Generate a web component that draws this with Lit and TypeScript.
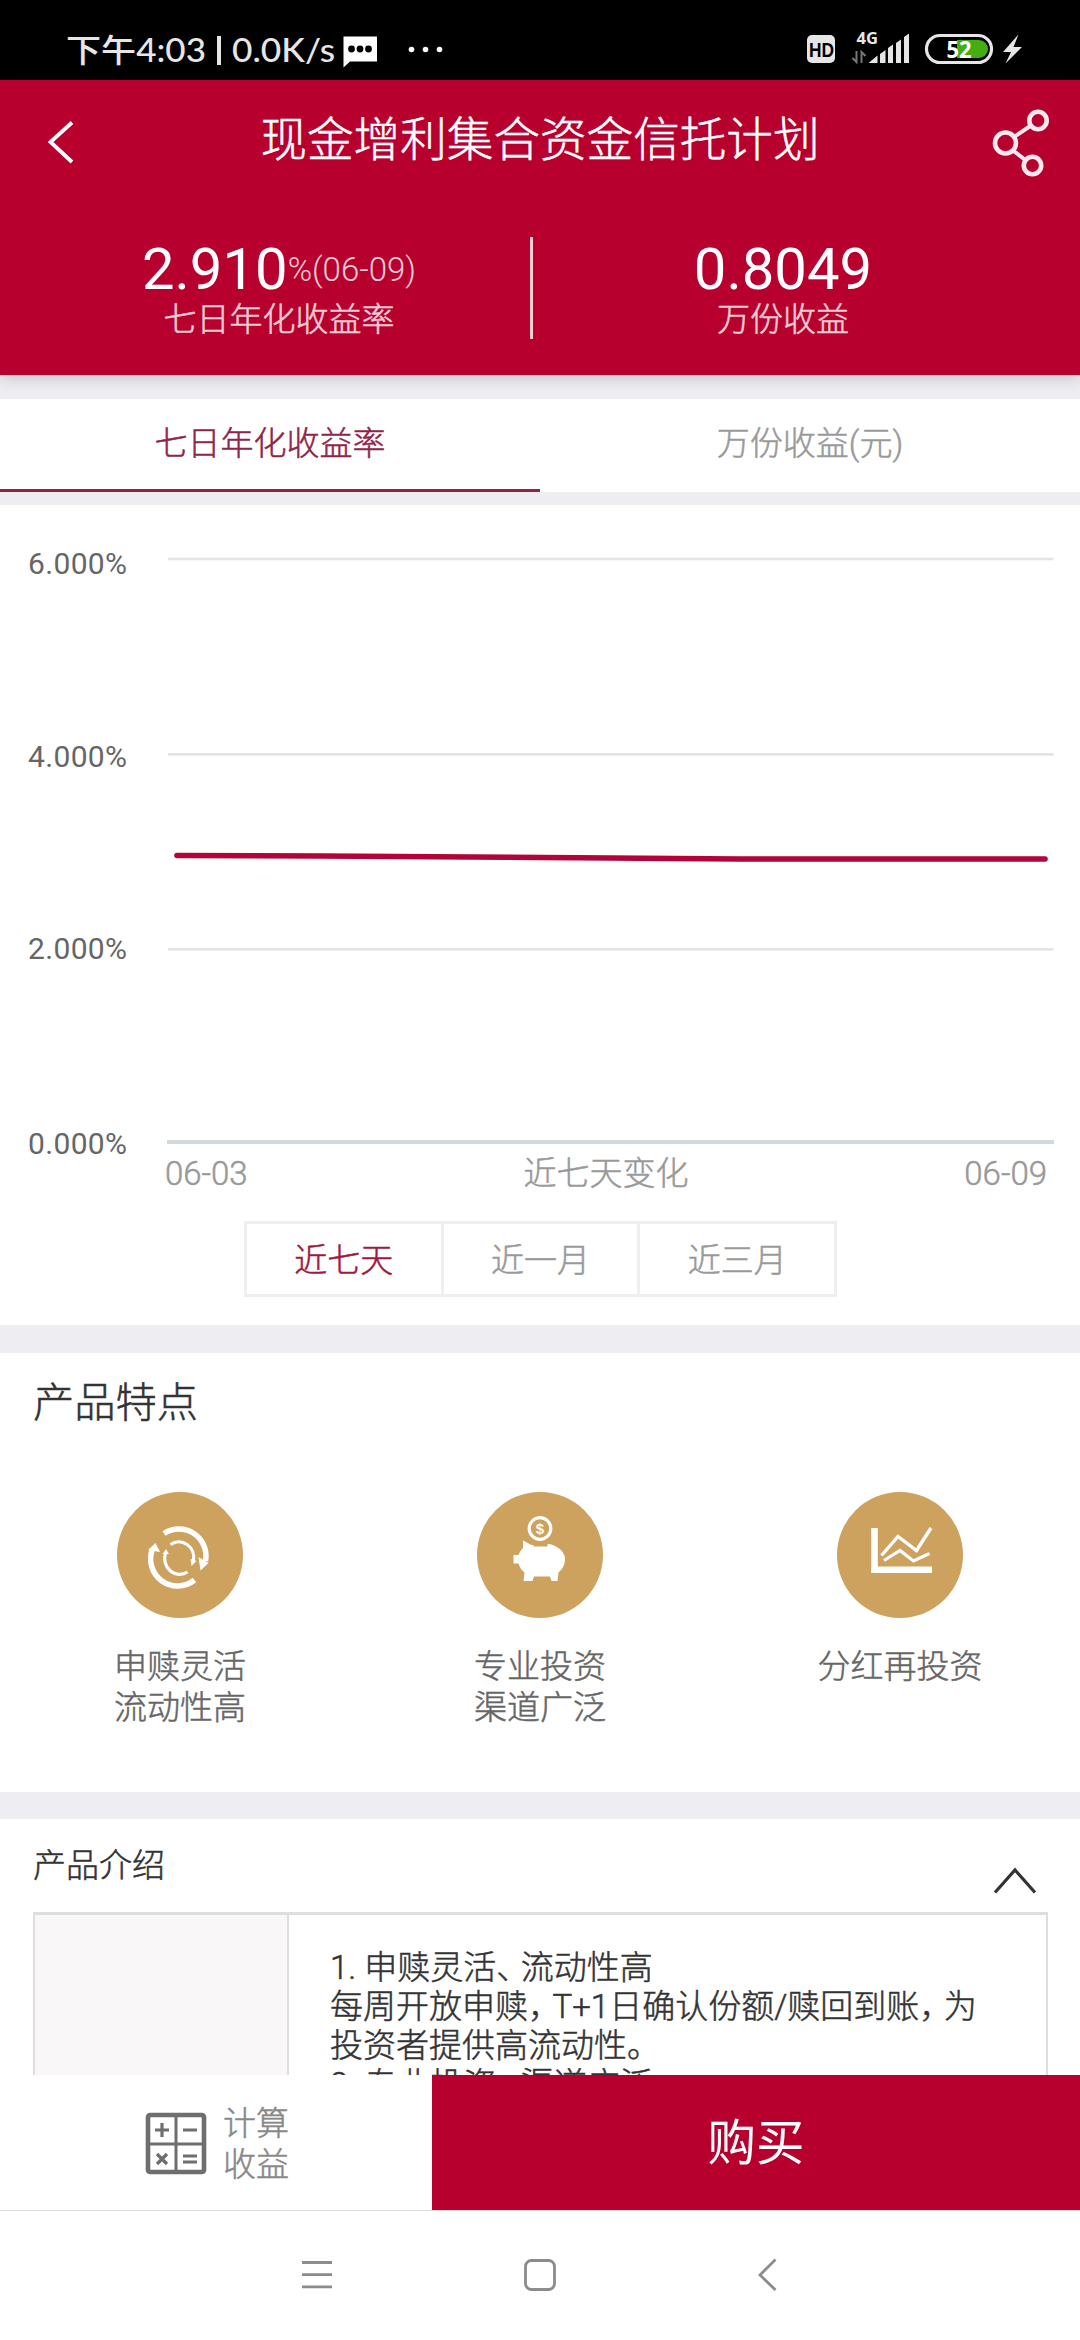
import { LitElement, html, css, svg } from "lit";
import { customElement, state } from "lit/decorators.js";

const ticks = [
  { label: "6.000%", line: 559, base: 574 },
  { label: "4.000%", line: 754.4, base: 767 },
  { label: "2.000%", line: 949.4, base: 959 },
];

const refreshIcon = svg`
  <g fill="none" stroke="#fff" stroke-linecap="butt">
    <path d="M47 41.500A27 27 0 0 1 88.500 69" stroke-width="5.500"/>
    <path d="M77.500 88A27 27 0 0 1 35.500 57" stroke-width="5.500"/>
    <path d="M53.500 52.500A15 16 0 0 1 76.500 69" stroke-width="3.200"/>
    <path d="M70.500 80A15 16 0 0 1 48.500 61" stroke-width="3.200"/>
  </g>
  <path fill="#fff" d="M81.500 65l10 6-8 7.500zM31 58l7.500-7 4.500 9zM73.500 67l6 2-5 5zM45.500 62l3.500-5 3 5z"/>`;

const piggyIcon = svg`
  <circle cx="63" cy="36.500" r="10.800" fill="none" stroke="#fff" stroke-width="3.200"/>
  <text x="63" y="42" class="coin">$</text>
  <path fill="#fff" d="M46 48.500l8.500 4.500h2v1.500h14v-2.500h2.500c9.500 3 15.500 8.500 15 16-.300 6-3.500 10-6.500 12.500l-1 8.500h-6l-1.500-4.500h-16l-1.500 4.500h-9l1-8.500c-3.500-2.500-5-6-6-9h-5v-8.500h5c1-3 2.500-5 4.500-7z"/>`;

const chartIcon = svg`
  <g fill="none" stroke="#fff">
    <path d="M37.500 36v41.700H95" stroke-width="6.600"/>
    <path d="M44.500 63.500L61 44.500l18.500 14L94 36" stroke-width="3.400"/>
    <path d="M47 68.500l16-10 13.500 10.500L92.500 61.500" stroke-width="3.200"/>
  </g>`;

@customElement("app-root")
export class AppRoot extends LitElement {
  @state() private tab = 0;
  @state() private range = 0;

  static styles = css`
    :host { display: block; width: 1080px; height: 2340px; overflow: hidden; background: #ededf2;
      font-family: Roboto, "Noto Sans CJK SC", sans-serif; font-weight: 300; font-size: 33px; color: #333;
      -webkit-text-stroke: .5px currentColor; }
    * { box-sizing: border-box; }
    svg { display: block; flex: none; -webkit-text-stroke: 0; }
    .page { display: flex; flex-direction: column; height: 2340px; }
    .status { height: 80px; background: #000; flex: none; }
    .st { font: 500 32px Lato, "Noto Sans CJK SC", sans-serif; fill: #e6e6e6; }
    .hd { font: 700 20px "Liberation Sans", sans-serif; fill: #000; }
    .g4 { font: 700 16.500px "Open Sans", sans-serif; fill: #e6e6e6; }
    .pct { font: 700 23px "Noto Sans", sans-serif; fill: #fff; }
    .head { height: 295px; background: #b8002e; color: #fff; flex: none; box-shadow: 0 3px 14px rgba(60, 50, 70, .22); position: relative; }
    .bar { height: 119px; display: flex; align-items: center; justify-content: space-between; padding: 0 28px 0 34px; }
    .title { font-size: 46.600px; line-height: 60px; margin-left: 8px; }
    .stats { display: flex; padding: 38px 45px 0 27px; }
    .stat { width: 504px; height: 102px; display: flex; flex-direction: column; align-items: center; }
    .sep { width: 3px; height: 102px; background: #ffccd6; margin: 0 -2px 0 -1px; }
    .big { display: flex; align-items: center; height: 63px; line-height: 62px; }
    .num { font-size: 58px; font-weight: 400; -webkit-text-stroke: 0; }
    .pc { opacity: .8; font-size: 33px; padding-top: 3px; -webkit-text-stroke: 0; }
    .cap { opacity: .8; line-height: 39px; height: 39px; }
    .tabs { margin-top: 24px; height: 93px; display: flex; background: #fff; flex: none; }
    .tab { flex: 1; display: flex; justify-content: center; align-items: center; border-bottom: 3px solid #fff; color: #999; padding-bottom: 7px; }
    .tab.on { color: #8e2548; border-color: #8e2548; }
    .strip { height: 13px; border-top: 3px solid #efeeee; flex: none; }
    .chart { height: 820px; background: #fff; flex: none; display: flex; flex-direction: column; }
    .plot { overflow: visible; }
    .yl { font: 400 30px Roboto, sans-serif; fill: #666; }
    .axis { display: flex; justify-content: space-between; padding: 0 33px 0 165px; height: 48px; line-height: 50px; color: #999; margin-top: -1px; }
    .ranges { display: flex; width: 593px; height: 76px; margin: 24px 0 0 244px; border: 3px solid #efefef; }
    .range { flex: 1; display: flex; justify-content: center; align-items: center; color: #999; padding-bottom: 3px; }
    .range + .range { border-left: 3px solid #efefef; }
    .range.on { color: #a01840; }
    .features { margin-top: 28px; height: 439px; background: #fff; flex: none; }
    .h2 { padding: 21px 33px 0; font-size: 41.250px; line-height: 58px; height: 139px; }
    .cols { display: flex; }
    .col { flex: 1; display: flex; flex-direction: column; align-items: center; color: #666; line-height: 41px; text-align: center; gap: 28px; }
    .disc { width: 126px; height: 126px; }
    .coin { font: 700 15px "Liberation Sans", sans-serif; fill: #fff; text-anchor: middle; }
    .intro { margin-top: 27px; height: 256px; background: #fff; flex: none; overflow: hidden; }
    .ih { display: flex; justify-content: space-between; height: 93px; padding: 25px 43px 0 33px; line-height: 44px; }
    .up { margin-top: 21px; }
    .table { display: flex; margin: 0 32px 0 33px; height: 400px; border: 3px solid #dedede; border-width: 3px 2px 0; }
    .lc { width: 254px; background: #faf7f8; border-right: 2px solid #dedede; flex: none; }
    .rc { padding: 33px 0 0 41px; line-height: 39px; white-space: nowrap; }
    .pu { letter-spacing: -8.500px; }
    .foot { display: flex; height: 135px; flex: none; }
    .calc { width: 432px; background: #fff; display: flex; align-items: center; padding-left: 145px; color: #888; line-height: 41px; gap: 16px; }
    .ct { padding-top: 2px; }
    .buy { flex: 1; background: #b8002e; color: #fff; font-size: 48.500px; display: flex; align-items: center; justify-content: center; font-weight: 400; padding-bottom: 8px; -webkit-text-stroke: 0; }
    .nav { flex: 1; background: #fff; border-top: 1px solid #dcdcdc; }
  `;

  private feature(icon: unknown, a: string, b = "") {
    return html`<div class="col">
      <svg class="disc" viewBox="0 0 126 126"><circle cx="63" cy="63" r="63" fill="#cda25e"/>${icon}</svg>
      <div>${a}<br>${b}</div>
    </div>`;
  }

  private statusBar() {
    return html`<svg class="status" width="1080" height="80" viewBox="0 0 1080 80">
      <text class="st" x="66" y="62" textLength="140" lengthAdjust="spacingAndGlyphs">下午4:03</text>
      <rect x="217" y="36" width="4" height="29" fill="#e6e6e6"/>
      <text class="st" x="232" y="62" textLength="103" lengthAdjust="spacingAndGlyphs">0.0K/s</text>
      <path fill="#fff" d="M343.500 36.500h33.500v25h-27l-6.500 6z"/>
      <g fill="#000"><circle cx="351.500" cy="49" r="3.400"/><circle cx="360" cy="49" r="3.400"/><circle cx="368.500" cy="49" r="3.400"/></g>
      <g fill="#fff"><circle cx="411.500" cy="49.500" r="2.800"/><circle cx="425.500" cy="49.500" r="2.800"/><circle cx="439.500" cy="49.500" r="2.800"/></g>
      <rect x="807" y="35" width="28" height="28" rx="5" fill="#e6e6e6"/>
      <text class="hd" x="809" y="56.500" textLength="25" lengthAdjust="spacingAndGlyphs">HD</text>
      <text class="g4" x="856.500" y="44" textLength="21.500" lengthAdjust="spacingAndGlyphs">4G</text>
      <path fill="none" stroke="#777" stroke-width="2" d="M852.500 58l4 4V51M861.500 63V52l4 4"/>
      <path fill="#e6e6e6" d="M868.500 63l9-7.500V63zM880 54l5.500-4v13H880zM888 48l5-3.500V63h-5zM896 43l5-3.500V63h-5zM904 37l5-3.500V63h-5z"/>
      <path fill="#43ad12" d="M957 40h22a9 9 0 0 1 0 18h-22z"/>
      <rect x="926.500" y="35.500" width="65" height="27" rx="13.500" fill="none" stroke="#e6e6e6" stroke-width="3.200"/>
      <text class="pct" x="946.500" y="57.500" textLength="25" lengthAdjust="spacingAndGlyphs">52</text>
      <path fill="#e6e6e6" d="M1018.500 34.500L1003 52h8l-5.500 11.500L1022 47h-8.500z"/>
    </svg>`;
  }

  render() {
    const tabs = ["七日年化收益率", "万份收益(元)"];
    const ranges = ["近七天", "近一月", "近三月"];
    return html`<div class="page">
      ${this.statusBar()}
      <div class="head">
        <div class="bar">
          <svg width="54" height="54" viewBox="0 0 54 54"><path d="M38 9.500L16.500 29 38 49" fill="none" stroke="#fff" stroke-width="3.800"/></svg>
          <div class="title">现金增利集合资金信托计划</div>
          <svg width="68" height="74" viewBox="0 0 68 74" fill="none" stroke="#ffe9ee" stroke-width="4.600">
            <circle cx="21.500" cy="40" r="10.500"/><circle cx="54" cy="17.500" r="8.700"/><circle cx="48.500" cy="62.500" r="8.700"/>
            <path d="M30 34L47 22.500M29 47.500l13 10" stroke-width="4"/>
          </svg>
        </div>
        <div class="stats">
          <div class="stat"><div class="big"><span class="num">2.910</span><span class="pc">%(06-09)</span></div><div class="cap">七日年化收益率</div></div>
          <div class="sep"></div>
          <div class="stat"><div class="big"><span class="num">0.8049</span></div><div class="cap">万份收益</div></div>
        </div>
      </div>
      <div class="tabs">${tabs.map((t, i) => html`<div class="tab ${i === this.tab ? "on" : ""}" @click=${() => (this.tab = i)}>${t}</div>`)}</div>
      <div class="strip"></div>
      <div class="chart">
        <svg class="plot" width="1080" height="645" viewBox="0 505 1080 645">
          ${ticks.map((t) => svg`<text class="yl" x="28" y=${t.base} textLength="99">${t.label}</text>
            <path d="M168 ${t.line}H1053.500" stroke="#e4e4e6" stroke-width="2.700"/>`)}
          <text class="yl" x="28" y="1154" textLength="99">0.000%</text>
          <path d="M167 1142H1054" stroke="#d2d9de" stroke-width="4"/>
          <path d="M177 855.500L320 856L610 858L740 859H1045" fill="none" stroke="#b1043a" stroke-width="5.600" stroke-linecap="round" stroke-linejoin="round"/>
        </svg>
        <div class="axis"><span>06-03</span><span>近七天变化</span><span>06-09</span></div>
        <div class="ranges">${ranges.map((t, i) => html`<div class="range ${i === this.range ? "on" : ""}" @click=${() => (this.range = i)}>${t}</div>`)}</div>
      </div>
      <div class="features">
        <div class="h2">产品特点</div>
        <div class="cols">
          ${this.feature(refreshIcon, "申赎灵活", "流动性高")}
          ${this.feature(piggyIcon, "专业投资", "渠道广泛")}
          ${this.feature(chartIcon, "分红再投资")}
        </div>
      </div>
      <div class="intro">
        <div class="ih"><span>产品介绍</span>
          <svg class="up" width="44" height="30" viewBox="0 0 44 30"><path d="M2 27.500L22 5l20 22.500" fill="none" stroke="#333" stroke-width="3.200"/></svg></div>
        <div class="table"><div class="lc"></div>
          <div class="rc">1. 申赎灵活<span class="pu">、</span>流动性高<br>每周开放申赎<span class="pu">，</span>T+1日确认份额/赎回到账<span class="pu">，</span>为<br>投资者提供高流动性。<br>2. 专业投资<span class="pu">、</span>渠道广泛</div>
        </div>
      </div>
      <div class="foot">
        <div class="calc">
          <svg width="62" height="64" viewBox="0 0 62 64" fill="none" stroke="#6e6e6e">
            <rect x="3" y="4" width="56" height="57" rx="2" stroke-width="4.600"/>
            <path d="M31 4v57M3 33h56" stroke-width="3"/>
            <path d="M10 19h14M17 12v14M38 19h14M38 45h14M38 51h14M12 43l10 10M22 43L12 53" stroke-width="3.200"/>
          </svg>
          <div class="ct">计算<br>收益</div>
        </div>
        <div class="buy">购买</div>
      </div>
      <div class="nav"><svg width="1080" height="129" viewBox="0 2211 1080 129" fill="none" stroke="#8c8c8c" stroke-width="2.800">
        <path d="M302 2262.500h30M302 2274.700h30M302 2286.800h30"/>
        <rect x="525.500" y="2260.500" width="29" height="29" rx="6"/>
        <path d="M775.500 2259.500L760 2275l15.500 15"/></svg></div>
    </div>`;
  }
}
